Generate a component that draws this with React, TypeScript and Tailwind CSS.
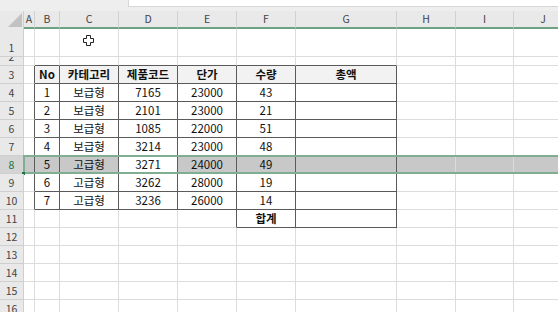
const cols = [
  { key: "A", w: "w-[11px]" },
  { key: "B", w: "w-[25px]" },
  { key: "C", w: "w-[59px]" },
  { key: "D", w: "w-[59px]" },
  { key: "E", w: "w-[59px]" },
  { key: "F", w: "w-[59px]" },
  { key: "G", w: "w-[101px]" },
  { key: "H", w: "w-[59px]" },
  { key: "I", w: "w-[58px]" },
  { key: "J", w: "w-[59px]" },
];

const header = ["No", "카테고리", "제품코드", "단가", "수량", "총액"];

const data = [
  ["1", "보급형", "7165", "23000", "43"],
  ["2", "보급형", "2101", "23000", "21"],
  ["3", "보급형", "1085", "22000", "51"],
  ["4", "보급형", "3214", "23000", "48"],
  ["5", "고급형", "3271", "24000", "49"],
  ["6", "고급형", "3262", "28000", "19"],
  ["7", "고급형", "3236", "26000", "14"],
];

const GRID = "border-[#dcdcdc]";
const DARK = "#5a5a5a";

type CellSpec = {
  text?: string;
  bold?: boolean;
  bg?: string;
  right?: boolean;
  bottom?: boolean;
};

function Cell({ w, spec }: { w: string; spec: CellSpec }) {
  return (
    <div
      className={`${w} shrink-0 h-full box-border border-r border-b ${GRID} flex items-center justify-center overflow-hidden whitespace-nowrap text-[11.5px] text-[#111] ${
        spec.bold ? "font-bold" : ""
      }`}
      style={{
        background: spec.bg,
        borderRightColor: spec.right ? DARK : undefined,
        borderBottomColor: spec.bottom ? DARK : undefined,
      }}
    >
      {spec.text}
    </div>
  );
}

function RowHead({ n, h, active }: { n: number; h: string; active?: boolean }) {
  return (
    <div
      className={`w-[24px] shrink-0 ${h} box-border border-r border-b border-[#cfcfcf] flex items-end justify-center pb-[3px] overflow-hidden text-[10.5px] leading-none ${
        active ? "bg-[#d4d4d4] text-[#217346]" : "bg-[#e9e9e9] text-[#444]"
      }`}
    >
      {n}
    </div>
  );
}

function specFor(row: number, colIdx: number): CellSpec {
  // colIdx: 0=A ... 9=J
  const s: CellSpec = {};
  const inTableCols = colIdx >= 1 && colIdx <= 6;
  if (row === 2 && inTableCols) s.bottom = true;
  if (row >= 3 && row <= 10) {
    if (colIdx === 0) s.right = true;
    if (inTableCols) {
      s.right = true;
      s.bottom = true;
    }
    if (row === 3 && inTableCols) {
      s.text = header[colIdx - 1];
      s.bold = true;
      s.bg = "#f2f2f2";
    }
    if (row >= 4 && inTableCols && colIdx <= 5) {
      s.text = data[row - 4][colIdx - 1];
    }
    if (row === 8) {
      s.bg = colIdx === 3 ? "#ffffff" : "#c8c8c8";
    }
  }
  if (row === 11) {
    if (colIdx === 4) s.right = true;
    if (colIdx === 5 || colIdx === 6) {
      s.right = true;
      s.bottom = true;
    }
    if (colIdx === 5) {
      s.text = "합계";
      s.bold = true;
    }
  }
  return s;
}

function SheetRow({ n, h }: { n: number; h: string }) {
  return (
    <div className={`flex ${h} relative`}>
      <RowHead n={n} h={h} active={n === 8} />
      {cols.map((c, i) => (
        <Cell key={c.key} w={c.w} spec={specFor(n, i)} />
      ))}
    </div>
  );
}

function CrossCursor() {
  return (
    <svg width="11" height="11" viewBox="0 0 11 11" className="absolute left-[83px] top-[6px]">
      <path
        d="M3.5 0.5h4v3h3v4h-3v3h-4v-3h-3v-4h3z"
        fill="#fff"
        stroke="#222"
        strokeWidth="1"
      />
    </svg>
  );
}

export default function App() {
  const rows = Array.from({ length: 16 }, (_, i) => i + 1);
  return (
    <div
      className="w-[558px] h-[312px] overflow-hidden bg-white relative"
      style={{ fontFamily: '"Noto Sans CJK KR", "Noto Sans", sans-serif' }}
    >
      {/* formula bar strip */}
      <div className="h-[11px] bg-[#eeeeee] flex">
        <div className="w-[128px]" />
        <div className="flex-1 h-[7px] bg-white border-b border-l border-[#d6d6d6]" />
      </div>

      {/* column headers */}
      <div className="flex h-[18px] bg-[#e9e9e9]">
        <div className="w-[24px] shrink-0 relative border-r border-[#cfcfcf]">
          <svg width="14" height="14" className="absolute left-[8px] top-[2px]">
            <polygon points="14,0 14,14 0,14" fill="#c2c2c2" />
          </svg>
        </div>
        {cols.map((c) => (
          <div
            key={c.key}
            className={`${c.w} shrink-0 box-border border-r border-[#d2d2d2] border-b-2 border-b-[#6ea283] flex items-center justify-center text-[10.5px] text-[#444]`}
          >
            {c.key}
          </div>
        ))}
      </div>

      {rows.map((n) => (
        <div key={n} className="relative">
          <SheetRow n={n} h={n === 1 ? "h-[28px]" : n === 2 ? "h-[9px]" : "h-[18px]"} />
          {n === 1 && <CrossCursor />}
          {n === 8 && (
            <div className="absolute left-[23px] right-0 top-[-1px] h-[19px] border-y-2 border-l-2 border-[#7fae92] pointer-events-none">
              <div className="absolute left-[-3px] bottom-[-3px] w-[3px] h-[3px] bg-[#217346]" />
            </div>
          )}
        </div>
      ))}
    </div>
  );
}
